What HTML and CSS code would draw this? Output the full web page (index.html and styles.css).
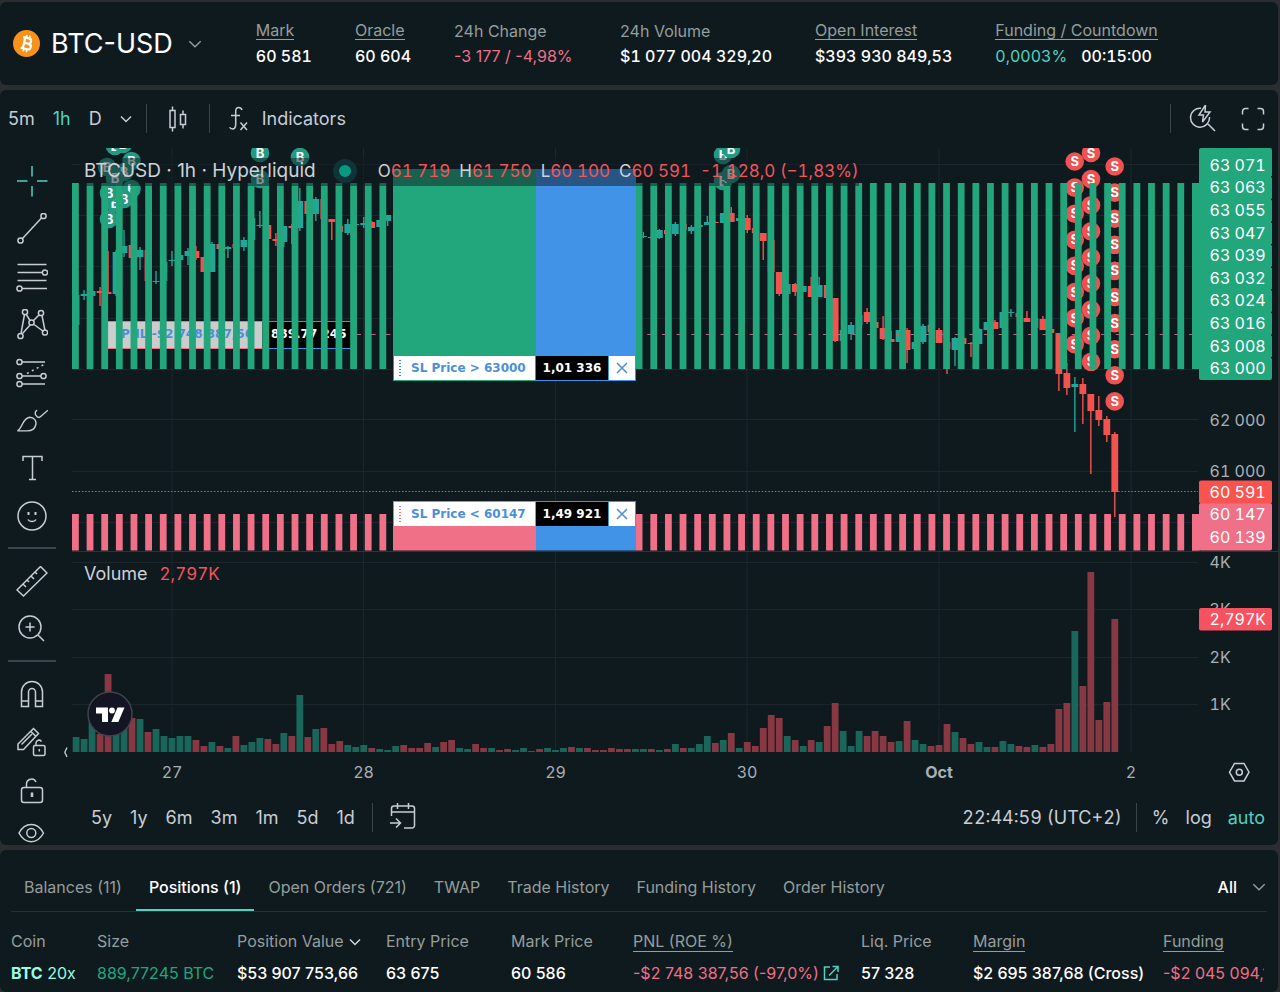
FILE: index.html
```html
<!DOCTYPE html>
<html lang="en">
<head>
<meta charset="utf-8">
<meta name="viewport" content="width=device-width, initial-scale=1">
<title>BTC-USD</title>
<link rel="stylesheet" href="styles.css">
</head>
<body>
<header class="card ticker">
  <button class="pair" type="button">
    <svg class="coin" viewBox="0 0 32 32" aria-hidden="true">
      <circle cx="16" cy="16" r="16" fill="#f7931a"/>
      <g transform="rotate(13 16 16)" fill="none" stroke="#fff" stroke-width="2.6">
        <path d="M10.500 9.500h7a3.100 3.100 0 0 1 0 6.300h-4.500M13 15.800h5.500a3.300 3.300 0 0 1 0 6.700h-8M13 9.500v13"/>
        <path d="M14.300 6v3.500M18 6v3.500M14.300 22.500V26M18 22.500V26" stroke-width="1.900"/>
      </g>
    </svg>
    <span class="pair-name">BTC-USD</span>
    <svg class="chev" viewBox="0 0 14 14" aria-hidden="true"><path d="M2 4.500l5 5 5-5"/></svg>
  </button>
  <dl class="stats">
    <div><dt class="tip">Mark</dt><dd>60 581</dd></div>
    <div><dt class="tip">Oracle</dt><dd>60 604</dd></div>
    <div class="change"><dt>24h Change</dt><dd class="neg">-3 177 / -4,98%</dd></div>
    <div><dt>24h Volume</dt><dd>$1 077 004 329,20</dd></div>
    <div><dt class="tip">Open Interest</dt><dd>$393 930 849,53</dd></div>
    <div><dt class="tip">Funding / Countdown</dt><dd class="pairvals"><span class="teal">0,0003%</span><span>00:15:00</span></dd></div>
  </dl>
</header>

<main class="card chart-card">
  <div class="toolbar">
    <button type="button">5m</button>
    <button type="button" class="teal">1h</button>
    <button type="button">D</button>
    <button type="button" class="more" aria-label="More intervals"><svg width="14" height="14" viewBox="0 0 14 14"><path d="M2 4.500l5 5 5-5"/></svg></button>
    <span class="vsep"></span>
    <button type="button" class="candles" aria-label="Chart type"><svg width="28" height="28" viewBox="0 0 28 28"><path d="M6 5.500h5v17H6zM8.500 1.500v4M8.500 22.500v4M16.500 9.500h5v10h-5zM19 5.500v4M19 19.500v4"/></svg></button>
    <span class="vsep"></span>
    <button type="button" class="indicators"><svg width="22" height="28" viewBox="0 0 22 28"><path d="M14 5c-.6-2-2-2.500-3.300-2.500-2.200 0-3 1.700-3 4V19c0 3.500-1.200 5-3.200 5-1.400 0-2.300-.5-2.800-1.700M3 10.500h9M12.500 17.500l6.500 7.500M19 17.500l-6.500 7.500"/></svg>Indicators</button>
    <span class="grow"></span>
    <span class="vsep"></span>
    <button type="button" class="quick" aria-label="Quick search"><svg width="28" height="28" viewBox="0 1 28 28"><path d="M12 4.200A9.500 9.500 0 1 0 20.500 13M19 20l7 7M16.500 1l-6.500 10h4.500l-1 7 7.500-10h-5z"/></svg></button>
    <button type="button" class="full" aria-label="Fullscreen"><svg width="24" height="24" viewBox="0 0 24 24"><path d="M1.500 7.500v-3a3 3 0 0 1 3-3h3M16.500 1.500h3a3 3 0 0 1 3 3v3M22.500 16.500v3a3 3 0 0 1-3 3h-3M7.500 22.500h-3a3 3 0 0 1-3-3v-3"/></svg></button>
  </div>

  <div class="workspace">
    <nav class="tools" aria-label="Drawing tools">
      <button type="button" class="teal" aria-label="Cross"><svg viewBox="0 0 32 32"><path d="M1 16h10.500M21 16h10.500M16 1v10.500M16 21v10.500"/></svg></button>
      <button type="button" aria-label="Trend line"><svg viewBox="0 2 32 32"><path d="M6.500 27.500L25.500 7"/><circle cx="4.500" cy="29.500" r="2.600"/><circle cx="27.500" cy="5" r="2.600"/></svg></button>
      <button type="button" aria-label="Fibonacci"><svg viewBox="0 2 32 32"><path d="M1.500 5.500h29M1.500 13.500h26M1.500 21.500h29M5 29.500h26"/><circle cx="29" cy="13.500" r="2.600" fill="#0f1a1f"/><circle cx="3.500" cy="29.500" r="2.600" fill="#0f1a1f"/></svg></button>
      <button type="button" aria-label="Patterns"><svg viewBox="0 2 32 32"><path d="M5 26.500L8.500 7.500M10 7l4 6.500M17.500 13.500l5.500-5.500M26 8.500l3 15M6.500 26.500l8-9M18 17.500l9.500 7"/><circle cx="9" cy="5" r="2.600"/><circle cx="25" cy="6" r="2.600"/><circle cx="15.500" cy="15.500" r="2.600"/><circle cx="4.500" cy="29" r="2.600"/><circle cx="29" cy="25.500" r="2.600"/></svg></button>
      <button type="button" aria-label="Forecast"><svg viewBox="0 1 32 32"><path d="M6 6h23M6 20h19M6 28h23"/><path stroke-dasharray="2 3.500" d="M11 17.500L28 8.500"/><circle cx="3.500" cy="6" r="2.600"/><circle cx="3.500" cy="20" r="2.600"/><circle cx="27.500" cy="20" r="2.600"/><circle cx="3.500" cy="28" r="2.600"/></svg></button>
      <button type="button" aria-label="Brush"><svg viewBox="0 1 34 32"><path d="M1.500 27.500C7 25 6.500 14 14.500 13c5 0 7.500 4 6.500 8-1 4.500-4.500 6.500-9 6.500zM22.500 5.500c-3 1.500-2.500 4.500-.5 6.500 1.500 1.500 3 1.500 4.200.3L34 5.500"/></svg></button>
      <button type="button" aria-label="Text"><svg viewBox="0 1 32 32"><path d="M7 9V4.500h19V9M16.500 4.500v23M13 27.500h7"/></svg></button>
      <button type="button" aria-label="Emoji"><svg viewBox="0 1 32 32"><circle cx="16" cy="16" r="14"/><path d="M12 19.500c1.200 2.700 6.800 2.700 8 0"/><path stroke-width="3" d="M11.500 13.500h2M18.500 13.500h2"/></svg></button>
      <hr>
      <button type="button" aria-label="Measure"><svg viewBox="0 1 32 32"><path d="M1 25L24.500 1.500l6.500 6.500L7.500 31zM7 19l3 3M11 15l2 2M15 11l3 3M19 7l2 2"/></svg></button>
      <button type="button" aria-label="Zoom in"><svg viewBox="0 2 32 32"><circle cx="14" cy="15" r="11"/><path d="M22 23l6 6M14 10.500v9M9.500 15h9"/></svg></button>
      <hr>
      <button type="button" aria-label="Magnet"><svg viewBox="0 1 32 32"><path d="M5.500 28.500V14a10.500 10.500 0 0 1 21 0v14.500h-7V14a3.500 3.500 0 0 0-7 0v14.500zM5.500 23h7M19.500 23h7"/></svg></button>
      <button type="button" aria-label="Stay in drawing mode"><svg viewBox="0 0 32 32"><path d="M2 22.500V17L17.500 1.500l5 5L7.500 22.500zM15 4.500l5 5M5.500 17.500L16 7"/><rect x="17.500" y="18.500" width="11.500" height="10" rx="1.500"/><path d="M20 18.500v-2.500a3 3 0 0 1 5.500-1.500M23.300 22v2.500"/></svg></button>
      <button type="button" aria-label="Lock drawings"><svg viewBox="0 1 32 32"><rect x="5.500" y="13.500" width="21" height="15" rx="2.500"/><path d="M10.500 13.500V9.500a5 5 0 0 1 9.500-1.500"/><path stroke-width="2.500" d="M16 18.500v4.500"/></svg></button>
      <button type="button" class="eye" aria-label="Hide drawings"><svg viewBox="0 0 32 32"><path d="M3 16c6-11.500 18.500-11.500 24.500 0-6 11.500-18.500 11.500-24.500 0z"/><circle cx="15.300" cy="16" r="4.500"/></svg></button>
    </nav>

    <div class="chart-col">
      <div class="plot">
        <svg id="chart" class="chart" viewBox="64 148 1214 642" preserveAspectRatio="xMinYMin meet" role="img" aria-label="BTCUSD price and volume"></svg>
        <div class="legend">
          <span class="sym">BTCUSD · 1h · Hyperliquid</span>
          <span class="status"></span>
          <span class="ohlc"><span>O<b>61 719</b></span><span>H<b>61 750</b></span><span>L<b>60 100</b></span><span>C<b>60 591</b></span><b>-1 128,0 (−1,83%)</b></span>
        </div>
        <div class="legend volume"><span>Volume</span><b>2,797K</b></div>
        <div class="order above"><span class="otext"><i></i><span>SL Price &gt; 63000</span></span><span class="qty">1,01 336</span><button type="button" aria-label="Cancel order"><svg width="12" height="12" viewBox="0 0 12 12"><path d="M1 1l10 10M11 1L1 11"/></svg></button></div>
        <div class="order below"><span class="otext"><i></i><span>SL Price &lt; 60147</span></span><span class="qty">1,49 921</span><button type="button" aria-label="Cancel order"><svg width="12" height="12" viewBox="0 0 12 12"><path d="M1 1l10 10M11 1L1 11"/></svg></button></div>
      </div>
      <div class="ranges">
        <button type="button">5y</button><button type="button">1y</button><button type="button">6m</button><button type="button">3m</button><button type="button">1m</button><button type="button">5d</button><button type="button">1d</button>
        <span class="vsep"></span>
        <button type="button" aria-label="Go to date"><svg width="28" height="28" viewBox="0 1 28 28"><path d="M3.500 14V6.500a2.500 2.500 0 0 1 2.500-2.500h18a2.500 2.500 0 0 1 2.500 2.500v17a2.500 2.500 0 0 1-2.500 2.500h-8M3.500 10h23M9.500 1v6M20.500 1v6M2 21h10M8 16.500l4.500 4.500L8 25.500"/></svg></button>
        <span class="grow"></span>
        <div class="scale-modes">
          <button type="button">22:44:59 (UTC+2)</button>
          <span class="vsep"></span>
          <button type="button">%</button><button type="button">log</button><button type="button" class="teal">auto</button>
        </div>
      </div>
    </div>
  </div>
</main>

<section class="card account">
  <div class="tabs" role="tablist">
    <button type="button" role="tab">Balances (11)</button>
    <button type="button" role="tab" aria-selected="true">Positions (1)</button>
    <button type="button" role="tab">Open Orders (721)</button>
    <button type="button" role="tab">TWAP</button>
    <button type="button" role="tab">Trade History</button>
    <button type="button" role="tab">Funding History</button>
    <button type="button" role="tab">Order History</button>
    <span class="grow"></span>
    <button type="button" class="filter">All <svg class="chev" viewBox="0 0 14 14"><path d="M2 4.500l5 5 5-5"/></svg></button>
  </div>
  <div class="table-wrap">
    <table>
      <colgroup><col class="c1"><col class="c2"><col class="c3"><col class="c4"><col class="c5"><col class="c6"><col class="c7"><col class="c8"><col class="c9"></colgroup>
      <thead><tr><th>Coin</th><th>Size</th><th>Position Value <svg class="sort" viewBox="0 0 14 14"><path d="M2 4.500l5 5 5-5"/></svg></th><th>Entry Price</th><th>Mark Price</th><th><span class="tip">PNL (ROE %)</span></th><th>Liq. Price</th><th><span class="tip">Margin</span></th><th><span class="tip">Funding</span></th></tr></thead>
      <tbody><tr><td class="coin-cell"><strong>BTC</strong> 20x</td><td class="pos">889,77245 BTC</td><td>$53 907 753,66</td><td>63 675</td><td>60 586</td><td class="neg">-$2 748 387,56 (-97,0%) <button type="button" class="share" aria-label="Share PNL"><svg width="16" height="16" viewBox="0 0 16 16"><path d="M7 2H1.500v12.500H14V9M9.500 1.500H15V7M15 1.500L6 10.500"/></svg></button></td><td>57 328</td><td>$2 695 387,68 (Cross)</td><td class="neg">-$2 045 094,12</td></tr></tbody>
    </table>
  </div>
</section>
<script src="chart.js"></script>
</body>
</html>
```
FILE: styles.css
```css
* { box-sizing: border-box; }
body {
  margin: 0;
  padding: 2px 2px 0 0;
  min-height: 100vh;
  display: flex;
  flex-direction: column;
  gap: 5px;
  background: #2b2e30;
  color: #fff;
  font-family: Inter, "Liberation Sans", sans-serif;
  font-size: 16px;
  overflow-x: hidden;
}
button {
  margin: 0;
  padding: 0;
  border: 0;
  background: none;
  color: inherit;
  font: inherit;
  white-space: nowrap;
  display: inline-flex;
  align-items: center;
}
button svg, .sort { fill: none; stroke: currentColor; stroke-width: 1.5; }
.card { background: #0f1a1f; border-radius: 6px; }
.teal { color: #50d2c1; }
.neg { color: #ed7088; }
.pos { color: #1fa67d; }
.grow { flex: 1; }
.chev { width: 16px; height: 16px; color: #949e9c; }
button .chev { stroke-width: 1.2; }

.ticker { display: flex; align-items: center; height: 83px; padding: 0 13px; gap: 53px; }
.pair { gap: 11px; font-size: 27px; }
.pair .chev { margin-left: 3px; }
.coin { width: 27px; height: 27px; }
.pair .coin { stroke: none; }
.stats { display: flex; align-items: flex-end; gap: 43px; margin: 0; font-variant-numeric: tabular-nums; }
.stats dt { color: #949e9c; line-height: 20px; width: max-content; font-variant-numeric: normal; }
.stats .tip { line-height: 18px; }
.stats dd { margin: 5px 0 0; line-height: 21px; font-weight: 500; white-space: nowrap; }
.stats .tip + dd { margin-top: 6px; }
.stats .neg, .stats .teal { font-weight: 400; }
.stats .change { min-width: 123px; font-variant-numeric: normal; }
.tip { border-bottom: 1px solid #949e9c; }
.pairvals { display: flex; gap: 14px; }

.chart-card { display: flex; flex-direction: column; color: #c8cdd4; overflow: hidden; }
.toolbar { display: flex; align-items: center; height: 57px; padding: 0 13px 0 8px; gap: 18px; font-size: 18px; }
.vsep { width: 1px; height: 29px; background: #3a4449; }
.more { margin: 0 -5px 0 -1px; }
.indicators { gap: 12px; }
.toolbar .candles { margin: 0 -1px; }
.full { margin-left: 6px; }
.workspace { display: flex; height: 698px; padding-top: 1px; }
.tools { width: 64px; padding-top: 9px; display: flex; flex-direction: column; flex: none; }
.tools button { height: 48px; justify-content: center; flex: none; }
.tools svg { width: 32px; height: 32px; }
.tools .eye { height: 36px; }
.tools hr { width: 48px; height: 2px; margin: 6px 8px 9px; border: 0; background: #39444a; flex: none; }
.chart-col { flex: 1; min-width: 0; }
.plot { position: relative; height: 642px; overflow: hidden; }
.chart { display: block; width: 1214px; height: 642px; font-size: 16px; font-variant-numeric: tabular-nums; }
.axis { fill: #a9b0b6; }
.tag { fill: #fff; }
.time { text-anchor: middle; }
.mark { fill: #fff; font-size: 13px; font-weight: 700; text-anchor: middle; }
.order-svg { font: 700 12px "DejaVu Sans", sans-serif; }

.legend {
  position: absolute;
  left: 16px;
  top: 10px;
  height: 28px;
  width: 779px;
  display: flex;
  align-items: center;
  padding: 0 0 3px 4px;
  background: rgba(15, 26, 31, .5);
  font-size: 18px;
  white-space: nowrap;
  color: #cdd2d9;
  font-variant-numeric: tabular-nums;
}
.sym { font-size: 19px; font-variant-numeric: normal; }
.legend b { font-weight: 400; color: #f2545b; }
.status { flex: none; width: 24px; height: 24px; margin: 0 21px 0 17px; border-radius: 50%; background: #089981; border: 6px solid #0e3338; }
.ohlc { display: flex; gap: 9px; font-size: 17px; }
.legend.volume { top: 413px; width: 150px; gap: 12px; background: none; }
.volume b { font-size: 17px; }

.order {
  position: absolute;
  left: 329px;
  width: 243px;
  height: 26px;
  display: flex;
  align-items: stretch;
  font: 700 12px/24px "DejaVu Sans", sans-serif;
  white-space: nowrap;
}
.order.above { top: 207px; color: #22a67c; }
.order.below { top: 353px; color: #f07088; }
.otext { width: 143px; background: #fff; border: 1px solid currentColor; display: flex; }
.otext span { color: #4a90d9; }
.otext i { width: 2px; height: 16px; margin: 4px 10px 0 5px; background: repeating-linear-gradient(currentColor 0 1px, #fff 1px 3px); }
.qty { width: 73px; background: #000; color: #fff; text-align: center; border: 1px solid #4193e8; border-left: 0; }
.order button { width: 27px; background: #fff; border: 1px solid #4193e8; border-left: 0; color: #4a90d9; justify-content: center; }

.ranges { display: flex; align-items: center; height: 54px; padding: 0 13px 0 27px; gap: 18px; font-size: 18px; }
.ranges > .vsep { margin: 0 -3px 0 -1px; }
.scale-modes { display: flex; align-items: center; gap: 16px; font-variant-numeric: tabular-nums; }
.scale-modes .vsep { margin: 0 -1px 0 -2px; }

.account { flex: 1; padding: 0 11px; min-height: 142px; }
.tabs { display: flex; gap: 1px; height: 62px; padding-top: 15px; border-bottom: 1px solid #273035; color: #949e9c; }
.tabs button { padding: 0 13px; height: 46px; border-bottom: 2px solid transparent; }
.tabs button[aria-selected="true"] { color: #fff; font-weight: 500; border-bottom-color: #50d2c1; }
.tabs .filter { padding: 0; gap: 14px; color: #fff; font-weight: 500; }
.table-wrap { overflow: hidden; padding-top: 13px; margin-right: 3px; }
table { table-layout: fixed; border-collapse: collapse; width: 1280px; text-align: left; }
th, td { padding: 0; height: 32px; font-weight: 400; white-space: nowrap; }
th { color: #949e9c; }
td { font-weight: 500; }
td.neg, td.pos { font-weight: 400; }
.sort { width: 14px; height: 14px; vertical-align: -2px; color: #cfd4d3; }
.coin-cell { color: #97fce4; font-weight: 400; }
.share { color: #50d2c1; vertical-align: -2px; }
.c1 { width: 86px; } .c2 { width: 140px; } .c3 { width: 149px; } .c4 { width: 125px; } .c5 { width: 122px; }
.c6 { width: 228px; } .c7 { width: 112px; } .c8 { width: 190px; } .c9 { width: 128px; }
```
FILE: chart.js
```javascript
const NS = 'http://www.w3.org/2000/svg';
const svg = document.getElementById('chart');
const GREEN = '#22a67c', PINK = '#f07088', BLUE = '#4193e8';

function add(name, attrs, parent = svg, text) {
  const e = document.createElementNS(NS, name);
  for (const k in attrs) e.setAttribute(k, attrs[k]);
  if (text !== undefined) e.textContent = text;
  parent.appendChild(e);
  return e;
}
const rect = (x, y, w, h, fill, extra = {}) => add('rect', { x, y, width: w, height: h, fill, ...extra });
const line = (x1, y1, x2, y2, stroke, extra = {}) => add('line', { x1, y1, x2, y2, stroke, ...extra });
const barX = i => 76.1 + i * 7.99;

// Grid
const GRID = '#1b272c';
[172, 363.5, 555.5, 747, 939, 1131].forEach(x => line(x, 148, x, 752, GRID));
[164.5, 215.5, 266.5, 318.5, 369.5, 419.5, 471.5, 522.5, 562.5, 609.5, 657.5, 704.5].forEach(y => line(72, y, 1198, y, GRID));
line(72, 551.5, 1278, 551.5, '#2a363c');

// Volume: height in px, direction
const volume = ('15g 13g 30g 18r 78r 30g 30g 34r 33g 20r 23g 16g 14g 16g 16g 12r 6r 10g 6r 4g 16r 7g 10g 14g 13r 8r 19g 16r 57g 15r 23g 24r 8r 11r 7g 5g 7g 4r 3g 2g ' +
  '6g 7r 4r 4r 9r 5g 10r 12r 4g 3g 8r 4r 4g 2r 3r 2g 4g 1g 3r 4g 2g 4g 5r 4g 4r 2r 2r 4r 3r 3r 3g 3g 3r 2g 3r 8g 4r 4g 8g 16g ' +
  '9r 12g 19r 4g 10r 6r 24r 37r 34r 16g 12r 6g 12r 10g 26r 49r 21g 6g 21g 16r 21r 16r 10r 11g 31r 12g 8g 6r 7r 28r 20g 14r 8r 10g 5g 5r 11g 8g 6r 5r ' +
  '7g 5r 8r 43r 49r 121g 66r 180r 32r 50r 133r').split(' ').map(s => ({ h: parseInt(s, 10), up: s.endsWith('g') }));
volume.forEach((v, i) => rect(barX(i) - 3.4, 752 - v.h, 6.8, v.h, v.up ? '#1a665b' : '#873842'));

// Candles: index, high, body top, body bottom, low
const candles = [
  [0,295,295,325,325],[1,290,294,296,300],[2,290,291,296,296],[3,287,291,293,306],[4,251,292,294,294],[5,250,252,294,296],
  [6,230,246,253,257],[7,245,245,258,258],[8,247,250,257,270],[9,250,250,281,281],[10,271,281,282,284],[11,262,262,281,281],
  [12,251,260,261,266],[13,255,255,260,260],[14,248,251,256,265],[15,246,251,258,260],[16,257,257,272,272],[17,242,244,272,272],
  [18,244,244,249,249],[19,246,247,249,258],[20,243,244,248,248],[21,237,240,247,251],[22,217,218,240,240],[23,211,225,226,228],
  [24,225,225,239,239],[25,233,239,241,246],[26,226,226,242,247],[27,224,226,228,244],[28,188,201,228,231],[29,201,201,214,214],
  [30,197,199,214,221],[31,199,199,219,219],[32,219,219,222,240],[33,226,226,232,232],[34,219,224,233,235],[35,223,224,225,226],
  [36,217,223,225,228],[37,221,222,228,228],[38,220,220,227,227],[39,215,215,221,226],
  [71,232,236,237,238],[72,236,237,238,239],[73,229,230,238,239],[74,230,230,234,234],[75,222,224,234,236],[76,224,224,230,230],
  [77,225,227,231,234],[78,224,225,227,227],[79,216,222,225,225],[80,221,222,223,223],[81,213,213,223,223],[82,207,213,222,222],
  [83,218,218,221,221],[84,215,218,230,233],[85,228,228,233,233],[86,233,233,241,260],[87,240,240,272,272],[88,272,272,294,296],
  [89,284,284,294,294],[90,283,284,292,296],[91,286,286,292,292],[92,277,286,297,297],[93,277,285,297,297],[94,285,285,298,298],
  [95,298,298,341,342],[96,330,330,341,341],[97,322,325,334,340],[98,315,315,325,325],[99,308,312,322,324],[100,321,322,328,328],
  [101,316,328,339,340],[102,331,339,342,342],[103,330,330,342,342],[104,328,330,350,363],[105,342,342,349,349],[106,324,326,342,344],
  [107,325,325,332,332],[108,328,330,343,343],[109,342,342,349,374],[110,337,338,350,366],[111,337,338,344,344],[112,342,343,344,357],
  [113,328,329,344,344],[114,322,322,330,330],[115,320,322,329,329],[116,312,312,328,328],[117,309,312,313,317],[118,313,313,317,317],
  [119,311,318,322,322],[120,318,318,328,328],[121,316,319,330,330],[122,329,329,333,333],[123,333,333,374,391],[124,363,373,388,395],
  [125,377,384,387,432],[126,378,384,394,424],[127,394,394,411,474],[128,396,410,420,426],[129,416,419,435,442],[130,432,434,492,517]
];
candles.forEach(([i, hi, top, bot, lo]) => {
  const c = volume[i].up ? '#22a699' : '#f4524f';
  rect(barX(i) - 0.7, hi, 1.4, Math.max(1, lo - hi), c);
  rect(barX(i) - 3.4, top, 6.8, Math.max(1, bot - top), c);
});

// Open position line and its label
rect(108, 321.5, 154.5, 27, '#ccc');
rect(262.5, 321.5, 88, 27, '#000');
[321.5, 348.5].forEach(y => {
  line(108, y, 262.5, y, PINK);
  line(262.5, y, 351, y, BLUE);
});
add('text', { x: 121, y: 338, fill: '#4a90d9', class: 'order-svg' }, svg, 'PNL -$2 748 387,56');
add('text', { x: 271, y: 338, fill: '#fff', class: 'order-svg' }, svg, '889.77 245');
line(356, 334.5, 393, 334.5, '#b86a7c', { 'stroke-dasharray': '5 9.65' });
line(647.3, 334.5, 1198, 334.5, '#b86a7c', { 'stroke-dasharray': '5 9.64' });

// Fill markers
const markers = add('g', {});
const marker = (x, y, c, t) => {
  add('circle', { cx: x, cy: y, r: 9.3, fill: c }, markers);
  add('text', { x, y: y + 4.5, class: 'mark' }, markers, t);
};
[[115,146],[123,144],[131.5,161],[107,167],[124,172],[115,178],[131.5,189],[124,199],[115,203],[109,193],[109,219],[260,153],[260,179],[300,157],[723,155],[731,149],[723,181],[731,174]]
  .forEach(([x, y]) => marker(x, y, '#239a84', 'B'));
const column = (x, y0, n) => { for (let k = 0; k < n; k++) marker(x, y0 + k * 26.1, '#ef5250', 'S'); };
column(1074.7, 161.5, 8);
column(1091, 153, 9);
column(1114.7, 166.5, 10);

// Stacked order lines
const stripes = (x0, n, y, h, c) => { for (let k = 0; k < n; k++) rect(x0 + k * 14.64, y, 6.8, h, c); };
stripes(72, 22, 183, 186, GREEN);
stripes(635.7, 39, 183, 186, GREEN);
stripes(72, 22, 514, 36.5, PINK);
stripes(635.7, 39, 514, 36.5, PINK);
rect(393, 169, 143, 190, GREEN);
rect(536, 169, 100, 190, BLUE);
rect(393, 525, 143, 25.5, PINK);
rect(536, 525, 100, 25.5, BLUE);
line(72, 491.5, 1198, 491.5, '#d95c5a', { 'stroke-dasharray': '1.5 1.8' });

// Price axis
const label = (y, t, cls) => add('text', { x: 1209.5, y: y + 5.5, class: cls }, svg, t);
rect(1192, 183, 8, 186, GREEN);
rect(1192, 514, 8, 36.5, PINK);
rect(1199, 148, 73, 232, GREEN, { rx: 2 });
['63 071','63 063','63 055','63 047','63 039','63 032','63 024','63 016','63 008','63 000'].forEach((t, k) => {
  label(165.3 + k * 22.6, t, 'tag');
  if (k) rect(1271, 153.5 + k * 22.6, 1.5, 1.5, '#0f1a1f');
});
label(420, '62 000', 'axis');
label(471, '61 000', 'axis');
rect(1199, 503, 73, 47.5, PINK, { rx: 2 });
rect(1199, 480.5, 73, 23, '#f95350', { rx: 2 });
label(492, '60 591', 'tag');
label(514.5, '60 147', 'tag');
label(537, '60 139', 'tag');
[[562.5, '4K'], [609.5, '3K'], [657.5, '2K'], [704.5, '1K']].forEach(([y, t]) => label(y, t, 'axis'));
rect(1199, 608, 73, 22.5, '#f7525f', { rx: 2 });
label(619, '2,797K', 'tag');

// Time axis
[[172, '27'], [363.5, '28'], [555.5, '29'], [747, '30'], [939, 'Oct'], [1131, '2']].forEach(([x, t]) =>
  add('text', { x, y: 778, class: 'axis time', 'font-weight': t === 'Oct' ? 700 : 400 }, svg, t));
add('path', { d: 'M1234.5 763.5h9.5l5 8.7-5 8.700h-9.500l-5-8.700z', fill: 'none', stroke: '#c8cdd4', 'stroke-width': 1.5 });
add('circle', { cx: 1239.3, cy: 772.2, r: 3, fill: 'none', stroke: '#c8cdd4', 'stroke-width': 1.5 });
add('path', { d: 'M67 747.500l-2.200 4.700 2.200 4.700', fill: 'none', stroke: '#c8cdd4', 'stroke-width': 1.3 });

// Logo
add('circle', { cx: 110, cy: 714, r: 22, fill: '#131522', stroke: '#3f434e', 'stroke-width': 1.5 });
add('path', { d: 'M96 707.500h12v14.500h-6v-8.500h-6zM117.500 707.500h7l-6.200 14.500h-7z', fill: '#fff' });
add('circle', { cx: 112, cy: 710.5, r: 2.9, fill: '#fff' });
```
